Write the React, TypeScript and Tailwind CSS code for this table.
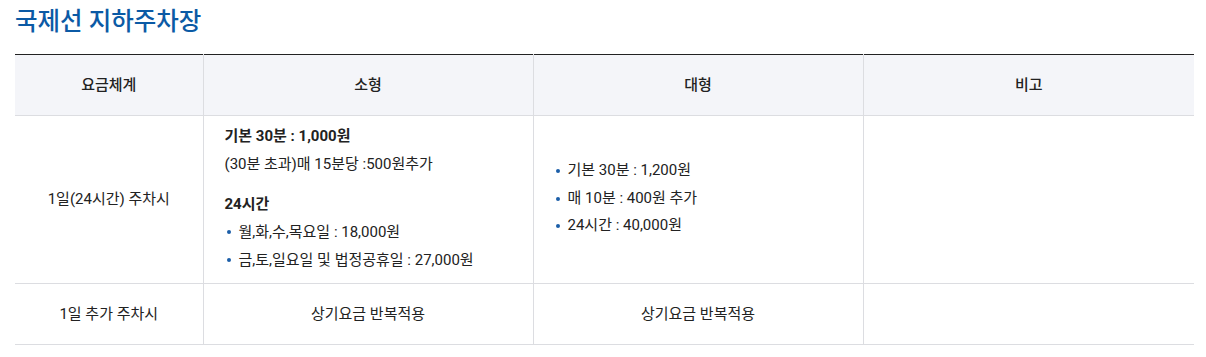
import React from "react";

const font = { fontFamily: "Roboto, 'Noto Sans CJK KR', sans-serif" };

function Bullet({ children }: { children: React.ReactNode }) {
  return (
    <li className="flex items-center">
      <span className="mr-[8px] ml-[2px] inline-block h-[4px] w-[4px] rounded-full bg-[#1b5ea8]" />
      <span>{children}</span>
    </li>
  );
}

export default function App() {
  return (
    <div className="bg-white px-[15px] pt-[6px] text-[15px] text-[#222]" style={font}>
      <h2 className="mb-[16px] text-[24.5px] font-medium leading-[32px] text-[#0b5aa5]">국제선 지하주차장</h2>
      <table className="w-[1179px] table-fixed border-collapse border-t border-t-[#222]">
        <colgroup>
          <col className="w-[188px]" />
          <col className="w-[330px]" />
          <col className="w-[330px]" />
          <col className="w-[331px]" />
        </colgroup>
        <thead>
          <tr className="h-[61px] bg-[#f4f5f9] border-b border-b-[#dcdde1]">
            <th className="font-medium">요금체계</th>
            <th className="border-l border-l-[#dcdde1] font-medium">소형</th>
            <th className="border-l border-l-[#dcdde1] font-medium">대형</th>
            <th className="border-l border-l-[#dcdde1] font-medium">비고</th>
          </tr>
        </thead>
        <tbody>
          <tr className="h-[168px] border-b border-b-[#dcdde1]">
            <td className="text-center align-middle">1일(24시간) 주차시</td>
            <td className="border-l border-l-[#dcdde1] pl-[21px] pb-[4px] align-middle leading-[28px]">
              <p className="font-bold">기본 30분 : 1,000원</p>
              <p>(30분 초과)매 15분당 :500원추가</p>
              <p className="mt-[12px] font-bold">24시간</p>
              <ul>
                <Bullet>월,화,수,목요일 : 18,000원</Bullet>
                <Bullet>금,토,일요일 및 법정공휴일 : 27,000원</Bullet>
              </ul>
            </td>
            <td className="border-l border-l-[#dcdde1] pl-[20px] pb-[2px] align-middle leading-[27.5px]">
              <ul>
                <Bullet>기본 30분 : 1,200원</Bullet>
                <Bullet>매 10분 : 400원 추가</Bullet>
                <Bullet>24시간 : 40,000원</Bullet>
              </ul>
            </td>
            <td className="border-l border-l-[#dcdde1]"></td>
          </tr>
          <tr className="h-[61px] border-b border-b-[#dcdde1]">
            <td className="text-center">1일 추가 주차시</td>
            <td className="border-l border-l-[#dcdde1] text-center">상기요금 반복적용</td>
            <td className="border-l border-l-[#dcdde1] text-center">상기요금 반복적용</td>
            <td className="border-l border-l-[#dcdde1]"></td>
          </tr>
        </tbody>
      </table>
    </div>
  );
}
